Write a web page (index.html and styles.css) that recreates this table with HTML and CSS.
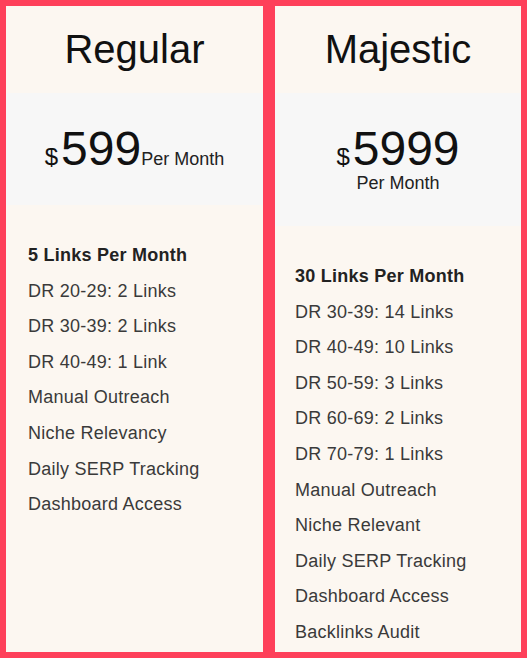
FILE: index.html
```html
<!DOCTYPE html>
<html lang="en">
<head>
<meta charset="utf-8">
<title>Pricing</title>
<link rel="stylesheet" href="styles.css">
</head>
<body>
<div class="plans">
  <section class="plan plan-regular">
    <h2 class="plan-title">Regular</h2>
    <div class="price"><span class="currency">$</span><span class="amount">599</span><span class="period">Per Month</span></div>
    <ul class="features">
      <li class="lead">5 Links Per Month</li>
      <li>DR 20-29: 2 Links</li>
      <li>DR 30-39: 2 Links</li>
      <li>DR 40-49: 1 Link</li>
      <li>Manual Outreach</li>
      <li>Niche Relevancy</li>
      <li>Daily SERP Tracking</li>
      <li>Dashboard Access</li>
    </ul>
  </section>
  <section class="plan plan-majestic">
    <h2 class="plan-title">Majestic</h2>
    <div class="price"><span class="currency">$</span><span class="amount">5999</span><span class="period">Per Month</span></div>
    <ul class="features">
      <li class="lead">30 Links Per Month</li>
      <li>DR 30-39: 14 Links</li>
      <li>DR 40-49: 10 Links</li>
      <li>DR 50-59: 3 Links</li>
      <li>DR 60-69: 2 Links</li>
      <li>DR 70-79: 1 Links</li>
      <li>Manual Outreach</li>
      <li>Niche Relevant</li>
      <li>Daily SERP Tracking</li>
      <li>Dashboard Access</li>
      <li>Backlinks Audit</li>
    </ul>
  </section>
</div>
</body>
</html>
```

FILE: styles.css
```css
* {
  box-sizing: border-box;
}

html,
body {
  margin: 0;
  padding: 0;
  height: 100%;
}

body {
  font-family: "Liberation Sans", Arial, sans-serif;
  background: #fe405a;
}

.plans {
  display: grid;
  grid-template-columns: 269fr 258fr;
  height: 100vh;
}

.plan {
  display: flex;
  flex-direction: column;
  background: #fcf7f1;
  border: 6px solid #fe405a;
  min-width: 0;
}

.plan-title {
  margin: 0;
  padding: 21px 0 21px;
  font-size: 40px;
  font-weight: 400;
  line-height: normal;
  color: #111;
  text-align: center;
}

.price {
  background: #f7f7f7;
  padding: 32px 25px 32px;
  text-align: center;
  font-size: 18px;
  line-height: normal;
  color: #111;
}

.currency {
  font-size: 24px;
  line-height: 1;
  margin-right: 3px;
}

.amount {
  font-size: 48px;
  line-height: 1;
}

.period {
  display: inline-block;
  white-space: nowrap;
  font-size: 18px;
  line-height: 18px;
  color: #222;
}

.features {
  list-style: none;
  margin: 0;
  padding: 33px 20px 0 22px;
  font-size: 18px;
  letter-spacing: 0.25px;
  color: #3a3a3a;
}

.features li {
  line-height: 35.6px;
}

.features .lead {
  font-weight: 700;
  color: #222;
}

.plan-majestic .features {
  padding-left: 20px;
}
```
